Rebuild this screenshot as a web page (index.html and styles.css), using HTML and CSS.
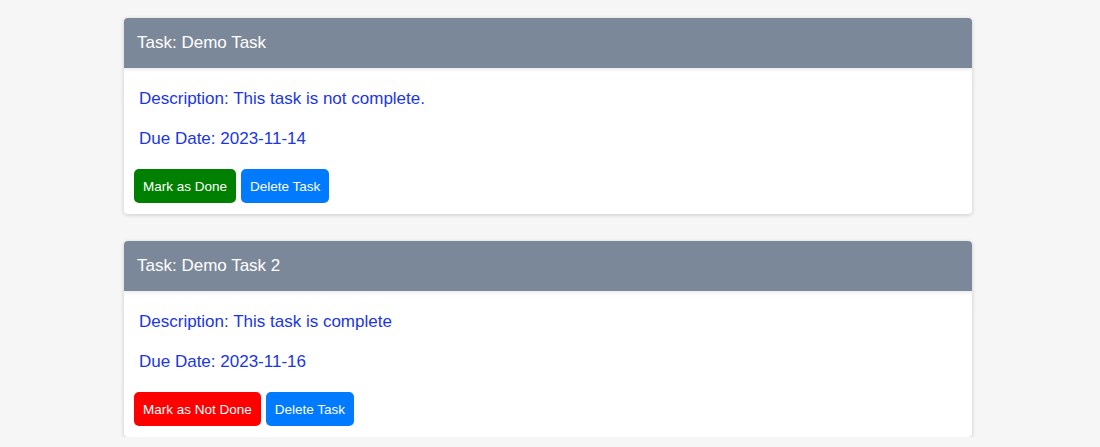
FILE: index.html
```html
<!DOCTYPE html>
<html>
<head>
<meta charset="utf-8">
<link rel="stylesheet" href="styles.css">
</head>
<body>
<div class="list">
  <div class="card">
    <div class="card-header">Task: Demo Task</div>
    <div class="card-body">
      <p>Description: This task is not complete.</p>
      <p>Due Date: 2023-11-14</p>
      <div class="actions">
        <button class="btn btn-done">Mark as Done</button>
        <button class="btn btn-delete">Delete Task</button>
      </div>
    </div>
  </div>
  <div class="card">
    <div class="card-header">Task: Demo Task 2</div>
    <div class="card-body">
      <p>Description: This task is complete</p>
      <p>Due Date: 2023-11-16</p>
      <div class="actions">
        <button class="btn btn-undone">Mark as Not Done</button>
        <button class="btn btn-delete">Delete Task</button>
      </div>
    </div>
  </div>
</div>
</body>
</html>
```
FILE: styles.css
```css
html, body {
  margin: 0;
  padding: 0;
}
body {
  background: #f6f6f6;
  font-family: "Liberation Sans", Arial, sans-serif;
  padding-right: 4px;
}
.list {
  width: 848px;
  margin: 0 auto;
  padding-top: 18px;
  display: flex;
  flex-direction: column;
  gap: 27px;
}
.card {
  background: #fff;
  border-radius: 4px;
  box-shadow: 0 1px 4px rgba(0, 0, 0, 0.18);
  overflow: hidden;
}
.card-header {
  background: #7b8899;
  color: #fff;
  height: 50px;
  line-height: 50px;
  padding: 0 13px;
  font-size: 17px;
  box-shadow: 0 2px 3px rgba(0, 0, 0, 0.08);
  position: relative;
}
.card-body {
  padding: 21px 10px 11px;
}
.card-body p {
  margin: 0 5px 20px;
  color: #1a36e6;
  font-size: 17px;
  line-height: 20px;
}
.actions {
  display: flex;
  gap: 5px;
}
.btn {
  border: none;
  border-radius: 5px;
  color: #fff;
  font-family: "Liberation Sans", Arial, sans-serif;
  font-size: 13.5px;
  height: 34px;
  padding: 0 9px;
}
.btn-done { background: #008000; }
.btn-undone { background: #ff0000; }
.btn-delete { background: #007bff; }
```
